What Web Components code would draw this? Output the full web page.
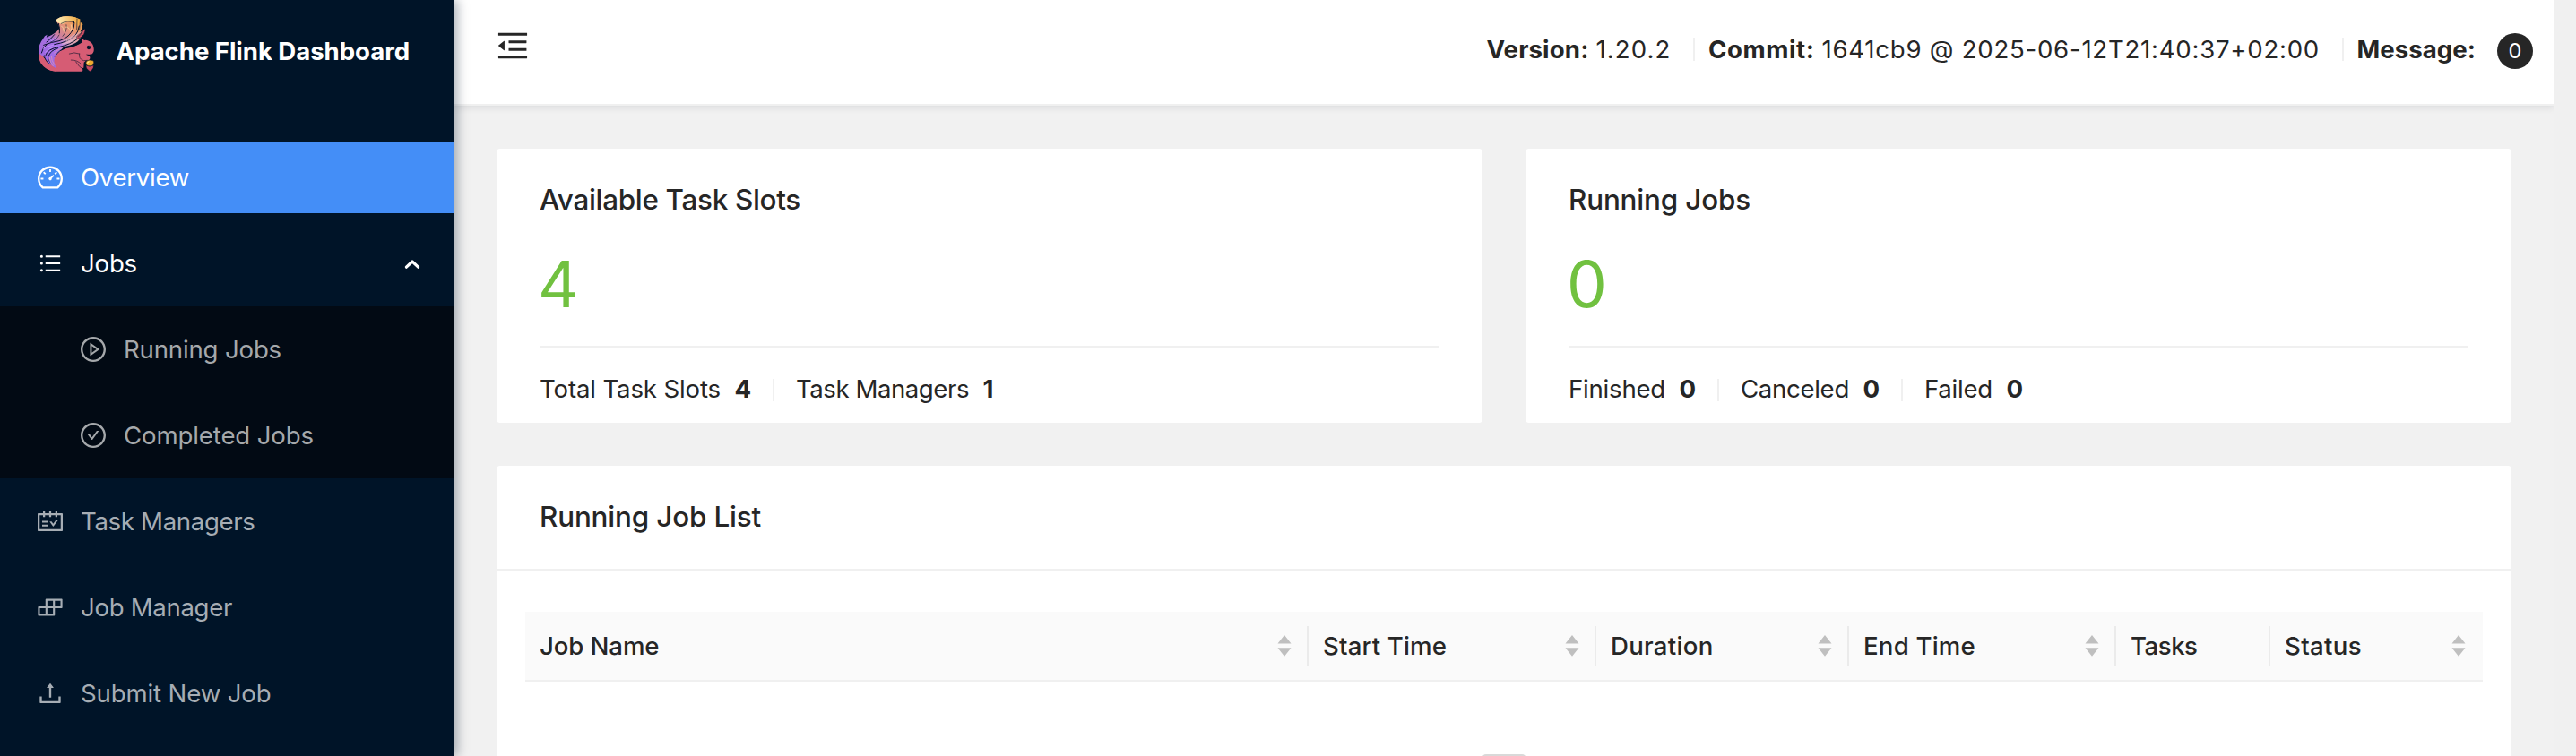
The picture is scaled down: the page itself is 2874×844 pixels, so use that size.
<!DOCTYPE html>
<html lang="en">
<head>
<meta charset="utf-8">
<title>Apache Flink Web Dashboard</title>
<style>
html,body{margin:0;height:100%;overflow:hidden}
body{font-family:Inter,"Liberation Sans",sans-serif;font-size:27.6px;font-weight:430;line-height:44px;color:#262626;background:#f0f0f0}
</style>
</head>
<body>
<flink-app></flink-app>
<script>
const define = (name, html, setup) => {
  const t = document.createElement('template');
  t.innerHTML = html;
  customElements.define(name, class extends HTMLElement {
    connectedCallback() {
      if (this.shadowRoot) return;
      this.attachShadow({ mode: 'open' }).appendChild(t.content.cloneNode(true));
      if (setup) setup(this, this.shadowRoot);
    }
  });
};

const RING = 'M512 64C264.6 64 64 264.6 64 512s200.6 448 448 448 448-200.6 448-448S759.4 64 512 64zm0 820c-205.4 0-372-166.6-372-372s166.6-372 372-372 372 166.6 372 372-166.6 372-372 372z';
const ICONS = {
  dashboard: 'M924.8 385.6a446.7 446.7 0 00-96-142.4 446.7 446.7 0 00-142.4-96C631.1 123.8 572.5 112 512 112s-119.1 11.8-174.4 35.2a446.7 446.7 0 00-142.4 96 446.7 446.7 0 00-96 142.4C75.8 440.9 64 499.5 64 560c0 132.7 58.3 257.7 159.9 343.1l1.7 1.4c5.8 4.8 13.1 7.5 20.6 7.5h531.7c7.5 0 14.8-2.7 20.6-7.5l1.7-1.4C901.7 817.7 960 692.7 960 560c0-60.5-11.9-119.1-35.2-174.4zM761.4 836H262.6A371.12 371.12 0 01140 560c0-99.4 38.7-192.8 109-263 70.3-70.3 163.7-109 263-109 99.4 0 192.8 38.7 263 109 70.3 70.3 109 163.7 109 263 0 105.6-44.5 205.5-122.6 276zM623.5 421.5a8.03 8.03 0 00-11.3 0L527.7 506c-18.7-5-39.4-.2-54.1 14.5a55.95 55.95 0 000 79.2 55.95 55.95 0 0079.2 0 55.87 55.87 0 0014.5-54.1l84.5-84.5c3.1-3.1 3.1-8.2 0-11.3l-28.3-28.3zM490 320h44c4.4 0 8-3.6 8-8v-80c0-4.4-3.6-8-8-8h-44c-4.4 0-8 3.6-8 8v80c0 4.4 3.6 8 8 8zm260 218v44c0 4.4 3.6 8 8 8h80c4.4 0 8-3.6 8-8v-44c0-4.4-3.6-8-8-8h-80c-4.4 0-8 3.6-8 8zm12.7-197.2l-31.1-31.1a8.03 8.03 0 00-11.3 0l-56.6 56.6a8.03 8.03 0 000 11.3l31.1 31.1c3.1 3.1 8.2 3.1 11.3 0l56.6-56.6c3.1-3.1 3.1-8.2 0-11.3zm-458.6-31.1a8.03 8.03 0 00-11.3 0l-31.1 31.1a8.03 8.03 0 000 11.3l56.6 56.6c3.1 3.1 8.2 3.1 11.3 0l31.1-31.1c3.1-3.1 3.1-8.2 0-11.3l-56.6-56.6zM262 530h-80c-4.4 0-8 3.6-8 8v44c0 4.4 3.6 8 8 8h80c4.4 0 8-3.6 8-8v-44c0-4.4-3.6-8-8-8z',
  bars: 'M912 192H328c-4.4 0-8 3.6-8 8v56c0 4.4 3.6 8 8 8h584c4.4 0 8-3.6 8-8v-56c0-4.4-3.6-8-8-8zm0 284H328c-4.4 0-8 3.6-8 8v56c0 4.4 3.6 8 8 8h584c4.4 0 8-3.6 8-8v-56c0-4.4-3.6-8-8-8zm0 284H328c-4.4 0-8 3.6-8 8v56c0 4.4 3.6 8 8 8h584c4.4 0 8-3.6 8-8v-56c0-4.4-3.6-8-8-8zM104 228a56 56 0 10112 0 56 56 0 10-112 0zm0 284a56 56 0 10112 0 56 56 0 10-112 0zm0 284a56 56 0 10112 0 56 56 0 10-112 0z',
  play: RING + 'M719.4 499.1l-296.1-215A15.9 15.9 0 00398 297v430c0 13.1 14.8 20.5 25.3 12.9l296.1-215a15.9 15.9 0 000-25.8zm-257.6 134V390.9L628.5 512 461.8 633.1z',
  check: RING + 'M699 353h-46.9c-10.2 0-19.9 4.9-25.9 13.3L469 584.3l-71.2-98.8c-6-8.3-15.6-13.3-25.9-13.3H325c-6.5 0-10.3 7.4-6.5 12.7l124.6 172.8a31.8 31.8 0 0051.7 0l210.6-292c3.9-5.3.1-12.7-6.4-12.7z',
  schedule: 'M928 224H768v-56c0-4.4-3.6-8-8-8h-56c-4.4 0-8 3.6-8 8v56H548v-56c0-4.4-3.6-8-8-8h-56c-4.4 0-8 3.6-8 8v56H328v-56c0-4.4-3.6-8-8-8h-56c-4.4 0-8 3.6-8 8v56H96c-17.7 0-32 14.3-32 32v576c0 17.7 14.3 32 32 32h832c17.7 0 32-14.3 32-32V256c0-17.7-14.3-32-32-32zm-40 568H136V296h120v56c0 4.4 3.6 8 8 8h56c4.4 0 8-3.6 8-8v-56h148v56c0 4.4 3.6 8 8 8h56c4.4 0 8-3.6 8-8v-56h148v56c0 4.4 3.6 8 8 8h56c4.4 0 8-3.6 8-8v-56h120v496zM416 496H232c-4.4 0-8 3.6-8 8v48c0 4.4 3.6 8 8 8h184c4.4 0 8-3.6 8-8v-48c0-4.4-3.6-8-8-8zm0 136H232c-4.4 0-8 3.6-8 8v48c0 4.4 3.6 8 8 8h184c4.4 0 8-3.6 8-8v-48c0-4.4-3.6-8-8-8zm308.2-177.4L620.6 598.3l-52.8-73.1c-3-4.2-7.8-6.6-12.9-6.6H500c-6.5 0-10.3 7.4-6.5 12.7l114.1 158.2a15.9 15.9 0 0025.8 0l165-228.7c3.8-5.3 0-12.7-6.5-12.7H737c-5-.1-9.8 2.4-12.8 6.5z',
  build: 'M916 210H376c-17.7 0-32 14.3-32 32v236H108c-17.7 0-32 14.3-32 32v272c0 17.7 14.3 32 32 32h540c17.7 0 32-14.3 32-32V546h236c17.7 0 32-14.3 32-32V242c0-17.7-14.3-32-32-32zm-504 68h200v200H412V278zm-68 468H144V546h200v200zm268 0H412V546h200v200zm268-268H680V278h200v200z',
  upload: 'M400 317.7h73.9V656c0 4.4 3.6 8 8 8h60c4.4 0 8-3.6 8-8V317.7H624c6.7 0 10.4-7.7 6.3-12.9L518.3 163a8 8 0 00-12.6 0l-112 141.7c-4.1 5.3-.4 13 6.3 13zM878 626h-60c-4.4 0-8 3.6-8 8v154H214V634c0-4.4-3.6-8-8-8h-60c-4.4 0-8 3.6-8 8v198c0 17.7 14.3 32 32 32h684c17.7 0 32-14.3 32-32V634c0-4.4-3.6-8-8-8z',
  fold: 'M408 442h480c4.4 0 8-3.6 8-8v-56c0-4.4-3.6-8-8-8H408c-4.4 0-8 3.6-8 8v56c0 4.4 3.6 8 8 8zm-8 204c0 4.4 3.6 8 8 8h480c4.4 0 8-3.6 8-8v-56c0-4.4-3.6-8-8-8H408c-4.4 0-8 3.6-8 8v56zm504-486H120c-4.4 0-8 3.6-8 8v56c0 4.4 3.6 8 8 8h784c4.4 0 8-3.6 8-8v-56c0-4.4-3.6-8-8-8zm0 632H120c-4.4 0-8 3.6-8 8v56c0 4.4 3.6 8 8 8h784c4.4 0 8-3.6 8-8v-56c0-4.4-3.6-8-8-8zM115.4 518.9L271.7 642c5.8 4.6 14.4.5 14.4-6.9V388.9c0-7.4-8.5-11.5-14.4-6.9L115.4 505.1a8.74 8.74 0 000 13.8z'
};

define('ui-icon', `
<style>:host{display:block;flex:none;width:28px;height:28px}svg{display:block;width:100%;height:100%}</style>
<svg viewBox="64 64 896 896" fill="currentColor"><path/></svg>`, (el, root) => {
  const name = el.getAttribute('name');
  root.querySelector('path').setAttribute('d', ICONS[name]);
  if (name === 'bars') root.querySelector('svg').setAttribute('viewBox', '0 0 1024 1024');
});

/* A text run whose tracking is spread so that it fills the width given in "w". */
define('ui-label', `
<style>:host{display:block;flex:none;white-space:nowrap}span{display:inline-block}</style>
<span><slot></slot></span>`, (el, root) => {
  const w = parseFloat(el.getAttribute('w'));
  if (!w) return;
  const run = root.querySelector('span');
  run.style.letterSpacing = (w - run.getBoundingClientRect().width) / el.textContent.length + 'px';
  el.style.width = w + 'px';
});

define('ui-divider', `<style>:host{display:block;flex:none;width:2px;height:26px;background:#f0f0f0}</style>`);

define('flink-logo', `
<style>:host{display:block;flex:none;width:64px;height:64px}svg{display:block;width:100%;height:100%}</style>
<svg viewBox="66 52 192 192" fill="none" stroke-linecap="round" stroke-linejoin="round">
  <defs>
    <linearGradient id="tail" gradientUnits="userSpaceOnUse" x1="195" y1="56" x2="90" y2="190">
      <stop offset="0" stop-color="#f0a845"/><stop offset=".3" stop-color="#e5927a"/><stop offset=".5" stop-color="#cd7f9c"/><stop offset=".66" stop-color="#a673e4"/><stop offset="1" stop-color="#a466d8"/>
    </linearGradient>
    <linearGradient id="sweep" gradientUnits="userSpaceOnUse" x1="210" y1="112" x2="90" y2="185">
      <stop offset="0" stop-color="#eaa08c"/><stop offset=".35" stop-color="#d9a3c0"/><stop offset=".6" stop-color="#a873ec"/><stop offset="1" stop-color="#9d68e2"/>
    </linearGradient>
    <linearGradient id="tip" x1="0" y1="0" x2="1" y2="0"><stop offset="0" stop-color="#fdf0bd"/><stop offset="1" stop-color="#efa53a"/></linearGradient>
  </defs>
  <path fill="url(#tail)" d="M70 190Q66 160 78 140L90 122L98 117L95 126L112 119Q134 105 139 96Q138 84 126 69Q140 54 168 55Q190 56 209 66L206 72L217 82L214 96Q206 116 196 124Q172 140 150 160L124 214Q104 208 96 192Z"/>
  <path fill="#d65c74" d="M69 178Q68 206 90 226Q106 240 128 240L215 240Q222 236 214 230L220 228L221 210Q228 202 238 203Q244 196 240 189L230 184L247 183Q256 176 254 163Q252 146 240 140Q232 134 222 136L215 130Q213 138 215 143Q200 154 176 160Q140 164 122 196Q118 218 100 214Q84 200 69 178Z"/>
  <path fill="url(#sweep)" d="M72 184Q76 160 104 150Q138 144 164 132Q186 116 200 110L212 106Q214 128 200 140Q186 152 160 156Q132 164 124 184Q116 206 130 232Q96 212 88 190Q80 178 72 184Z"/>
  <path fill="url(#tip)" d="M126 69Q142 54 166 56Q194 57 208 67Q202 76 203 88Q196 76 184 73Q166 71 156 79Q148 83 140 79Q134 80 126 69Z"/>
  <path fill="#d65c74" d="M69 180Q84 186 94 204Q104 222 134 232L128 240Q92 238 76 212Q68 196 69 180Z"/>
  <path fill="#cf5164" stroke="#06122a" stroke-width="1.5" d="M198 122Q212 112 224 97L225 103L221 116Q212 128 198 132Z"/>
  <g stroke="#06122a" stroke-width="3">
    <path d="M86 152Q112 142 138 138Q166 128 178 110Q192 92 187 72"/>
    <path d="M122 150Q168 142 192 120Q202 108 205 88M92 188Q98 164 140 158Q176 150 198 132"/>
    <path d="M124 190Q136 168 166 159Q196 156 212 140M102 190Q108 170 134 162"/>
    <path d="M139 112Q142 96 136 80M96 142Q112 130 122 117M79 178Q82 160 96 150"/>
  </g>
  <g stroke="#06122a" stroke-width="1.8">
    <path d="M145 80Q168 66 190 78M198 64L197 100M208 76L206 100M150 122Q166 104 162 84M110 142Q130 134 138 118M202 124Q212 116 216 108M96 206Q88 194 88 186M108 212Q98 198 100 184"/>
    <path d="M172 181Q188 174 206 181M206 181Q202 198 220 204L232 203M194 208Q206 228 218 232L217 240M178 202Q200 202 212 216M230 184Q238 188 247 183"/>
  </g>
  <g stroke-width="2.2">
    <path stroke="#f8dfa0" d="M158 92Q168 88 172 98M146 88Q154 92 154 106M178 84Q184 94 176 106"/>
    <path stroke="#ecc0cc" d="M162 138Q184 130 198 116M150 148Q176 142 194 130"/>
    <path stroke="#c49af8" d="M84 164Q94 156 118 152M92 176Q104 162 130 154M112 138Q124 132 130 124"/>
    <path stroke="#e99aa6" d="M112 190Q112 204 122 218M106 194Q106 208 118 222M122 178Q130 168 150 161"/>
  </g>
  <circle cx="237" cy="160" r="6.5" fill="#06122a"/><circle cx="239" cy="158" r="1.8" fill="#fff"/>
  <path fill="#f0ab2e" stroke="#06122a" stroke-width="1.5" d="M227 211Q230 202 240 202Q253 202 254 208Q254 220 246 222L234 222Q227 218 227 211Z"/>
  <path fill="#fde08a" d="M231 210Q234 205 240 206Q238 212 231 214Z"/>
  <path fill="#c94a62" stroke="#06122a" stroke-width="1" d="M228 220Q240 228 253 220L252 228L244 240L238 238L230 230Z"/>
</svg>`);

define('nav-item', `
<style>
:host{display:flex;align-items:center;height:80px;margin-bottom:16px;padding:0 36px 0 42px;color:#a6adb4}
:host([selected]){background:#448ef7;color:#fff}
:host([open]){color:#fff;margin-bottom:8px}
:host([sub]){padding-left:90px;color:#a5a8ab}
ui-icon{margin-right:20px}
svg{display:none;margin-left:auto;margin-top:1px}
:host([open]) svg{display:block}
</style>
<ui-icon></ui-icon><slot></slot>
<svg width="20" height="14" viewBox="0 0 20 14" fill="none" stroke="#fff" stroke-width="3.2" stroke-linecap="round" stroke-linejoin="round"><path d="M3.4 10.2L10 4l6.6 6.2"/></svg>`,
(el, root) => {
  const icon = document.createElement('ui-icon');
  icon.setAttribute('name', el.getAttribute('icon'));
  root.querySelector('ui-icon').replaceWith(icon);
});

define('side-bar', `
<style>
:host{display:block;position:relative;z-index:2;flex:none;width:506px;background:#001428;box-shadow:4px 0 12px rgba(0,21,41,.35)}
.brand{display:flex;align-items:flex-start;height:141px;padding:17px 0 0 42px;color:#fff}
.brand ui-label{margin:18px 0 0 23.5px;font-weight:700}
.sub{background:#020a14;padding:8px 0 8px;margin-bottom:8px;display:flow-root}
.sub nav-item:last-child{margin-bottom:0}
</style>
<div class="brand"><flink-logo></flink-logo><ui-label w="327.5">Apache Flink Dashboard</ui-label></div>
<nav>
<nav-item icon="dashboard" selected><ui-label w="121">Overview</ui-label></nav-item>
<nav-item icon="bars" open><ui-label w="63">Jobs</ui-label></nav-item>
<div class="sub">
<nav-item icon="play" sub><ui-label w="176">Running Jobs</ui-label></nav-item>
<nav-item icon="check" sub><ui-label w="212">Completed Jobs</ui-label></nav-item>
</div>
<nav-item icon="schedule"><ui-label w="194.5">Task Managers</ui-label></nav-item>
<nav-item icon="build"><ui-label w="169">Job Manager</ui-label></nav-item>
<nav-item icon="upload"><ui-label w="212.5">Submit New Job</ui-label></nav-item>
</nav>`);

define('top-bar', `
<style>
:host{display:flex;align-items:center;height:109px;padding:0 24px 7px 48px;background:#fff;border-bottom:2px solid #f0f0f0;box-shadow:0 2px 8px rgba(0,21,41,.1);position:relative}
ui-icon{width:36px;height:36px;margin-top:-7px;margin-right:auto}
b{font-weight:700}
ui-divider{margin:1px 15px 0 24.5px}
.v{margin-left:8px}
.badge{display:flex;align-items:center;justify-content:center;width:40px;height:40px;border-radius:50%;background:#262626;color:#fff;font-size:23.5px;margin:5px 0 0 24px}
</style>
<ui-icon name="fold"></ui-icon>
<b><ui-label w="114">Version:</ui-label></b><ui-label class="v" w="84">1.20.2</ui-label>
<ui-divider></ui-divider>
<b><ui-label w="118.5">Commit:</ui-label></b><ui-label class="v" w="555.5">1641cb9 @ 2025-06-12T21:40:37+02:00</ui-label>
<ui-divider></ui-divider>
<b><ui-label w="132.5">Message:</ui-label></b>
<span class="badge">0</span>`);

define('stat-item', `
<style>
:host{display:flex;align-items:center}
b{font-weight:650;margin-left:15.5px;width:18.5px}
ui-divider{margin:3px 24px 0 24px;height:25px}
:host([last]) ui-divider{display:none}
</style>
<slot></slot><b><slot name="n"></slot></b><ui-divider></ui-divider>`);

define('stat-card', `
<style>
:host{display:flex;flex-direction:column;flex:1;box-sizing:border-box;height:306px;padding:32px 48px 0;background:#fff;border-radius:4px}
div{flex:none}
.title{height:50px;line-height:50px;font-size:31.4px;font-weight:520}
.value{height:104px;line-height:104px;margin-top:17px;font-size:71px;font-weight:400;text-indent:-2px;color:#71c140}
.foot{display:flex;align-items:center;box-sizing:border-box;border-top:2px solid #f0f0f0;margin-top:17px;height:86px;padding-top:8px}
</style>
<div class="title"><slot name="title"></slot></div>
<div class="value"><slot name="value"></slot></div>
<div class="foot"><slot></slot></div>`);

define('col-head', `
<style>
:host{display:flex;align-items:center;justify-content:space-between;box-sizing:border-box;height:76px;padding:0 0 0 16px;font-weight:520}
.end{display:flex;align-items:center}
svg{display:none;margin-right:14px}
:host([sort]) svg{display:block}
.bar{width:2px;height:44px;background:#ebebeb}
:host([last]) svg{margin-right:16px}
:host([last]) .bar{display:none}
</style>
<slot></slot>
<div class="end"><svg width="22" height="26" viewBox="0 0 22 26" fill="#bfbfbf"><path d="M11 1L18.5 10.6H3.5ZM11 24.8L18.5 15.2H3.5Z"/></svg><div class="bar"></div></div>`);

define('job-list', `
<style>
:host{display:block;height:400px;background:#fff;border-radius:4px 4px 0 0}
.title{height:115px;line-height:115px;padding-left:48px;font-size:31.4px;font-weight:520;border-bottom:2px solid #f0f0f0}
.head{display:grid;grid-template-columns:874px 321px 282px 298px 172px 237px;margin:46px 32px 0;background:#fafafa;border-bottom:2px solid #f0f0f0}
.empty{width:50px;height:40px;margin:81px auto 0;box-sizing:border-box;border:2px solid #d9d9d9;border-radius:5px}
</style>
<div class="title"><ui-label w="247">Running Job List</ui-label></div>
<div class="head">
<col-head sort><ui-label w="133.5">Job Name</ui-label></col-head>
<col-head sort><ui-label w="138">Start Time</ui-label></col-head>
<col-head sort><ui-label w="114.5">Duration</ui-label></col-head>
<col-head sort><ui-label w="125">End Time</ui-label></col-head>
<col-head><ui-label w="74.5">Tasks</ui-label></col-head>
<col-head sort last><ui-label w="86">Status</ui-label></col-head>
</div>
<div class="empty"></div>`);

define('flink-app', `
<style>
:host{display:flex;height:844px;overflow:hidden}
main{flex:1;min-width:0;margin-right:24px;background:#f1f1f1;overflow:hidden}
.content{padding:48px}
.cards{display:flex;gap:48px;margin-bottom:48px}
</style>
<side-bar></side-bar>
<main>
<top-bar></top-bar>
<div class="content">
<div class="cards">
<stat-card>
<ui-label slot="title" w="291">Available Task Slots</ui-label><span slot="value">4</span>
<stat-item><ui-label w="202">Total Task Slots</ui-label><span slot="n">4</span></stat-item>
<stat-item last><ui-label w="193">Task Managers</ui-label><span slot="n">1</span></stat-item>
</stat-card>
<stat-card>
<ui-label slot="title" w="203">Running Jobs</ui-label><span slot="value">0</span>
<stat-item><ui-label w="108">Finished</ui-label><span slot="n">0</span></stat-item>
<stat-item><ui-label w="121">Canceled</ui-label><span slot="n">0</span></stat-item>
<stat-item last><ui-label w="76">Failed</ui-label><span slot="n">0</span></stat-item>
</stat-card>
</div>
<job-list></job-list>
</div>
</main>`);
</script>
</body>
</html>
